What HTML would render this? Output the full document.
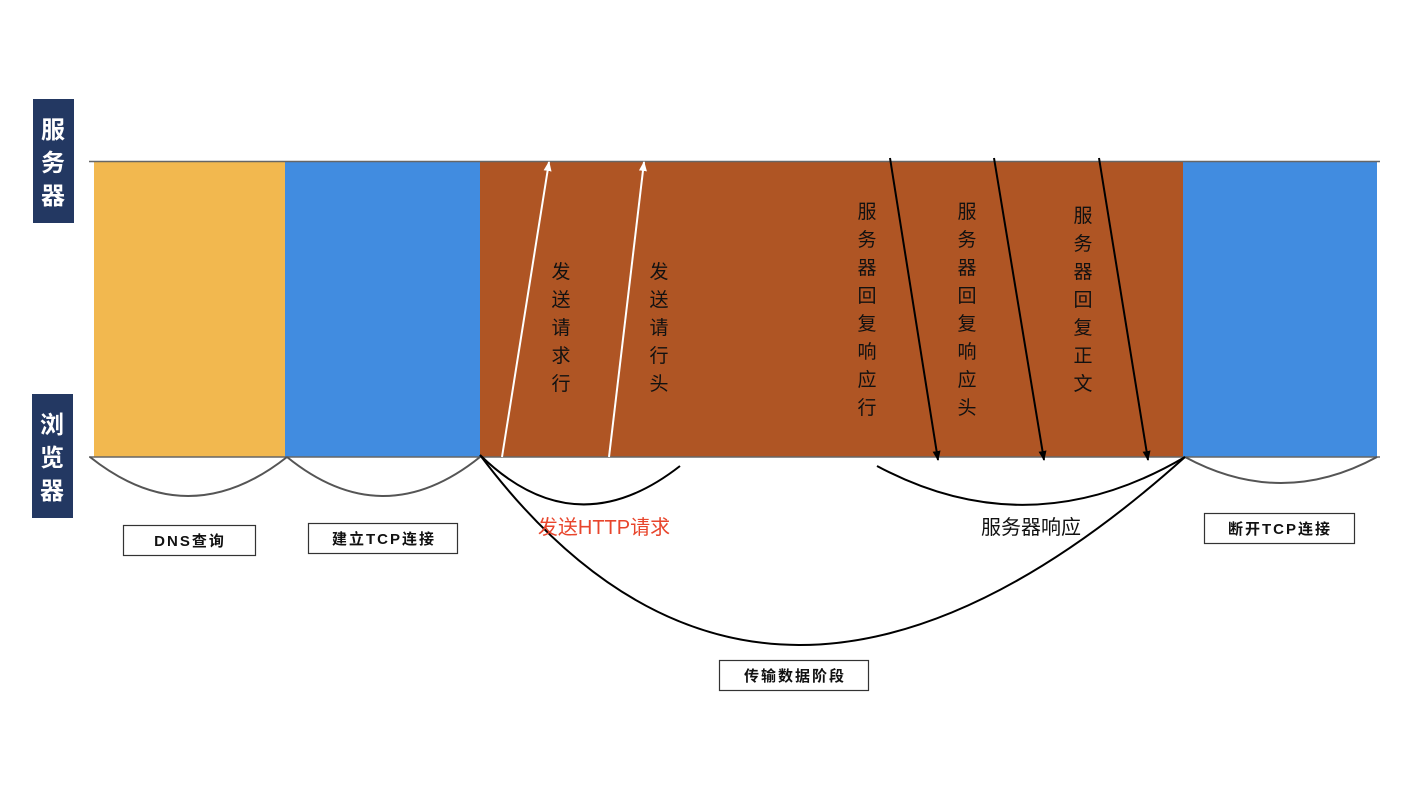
<!DOCTYPE html>
<html><head><meta charset="utf-8"><style>
html,body{margin:0;padding:0;background:#fff;width:1413px;height:795px;overflow:hidden}
svg{display:block}
text{font-family:"Liberation Sans","Noto Sans CJK SC",sans-serif}
</style></head><body>
<svg width="1413" height="795" viewBox="0 0 1413 795" xmlns="http://www.w3.org/2000/svg">
<defs>
<marker id="aw" markerWidth="10" markerHeight="8" refX="9" refY="4" orient="auto" markerUnits="userSpaceOnUse" viewBox="0 0 10 8"><path d="M0,0 L10,4 L0,8 Z" fill="#fff"/></marker>
<marker id="ab" markerWidth="10" markerHeight="8" refX="9" refY="4" orient="auto" markerUnits="userSpaceOnUse" viewBox="0 0 10 8"><path d="M0,0 L10,4 L0,8 Z" fill="#000"/></marker>
</defs>
<rect x="33" y="99" width="41" height="124" fill="#233862"/>
<rect x="32" y="394" width="41" height="124" fill="#233862"/>
<g fill="#fff" font-size="24" font-weight="bold" text-anchor="middle">
<text x="53" y="138">服</text><text x="53" y="171">务</text><text x="53" y="204">器</text>
<text x="52" y="433">浏</text><text x="52" y="466">览</text><text x="52" y="499">器</text>
</g>
<rect x="94" y="162" width="192" height="295" fill="#F2B84F"/>
<rect x="285" y="162" width="196" height="295" fill="#418CE0"/>
<rect x="480" y="162" width="704" height="295" fill="#AF5524"/>
<rect x="1183" y="162" width="194" height="295" fill="#418CE0"/>
<line x1="89" y1="161.5" x2="1380" y2="161.5" stroke="#666" stroke-width="1.5"/>
<line x1="89" y1="457" x2="1380" y2="457" stroke="#666" stroke-width="1.5"/>
<g fill="none" stroke="#555" stroke-width="2">
<path d="M90,457 Q188,535 287,457"/>
<path d="M287,457 Q383,535 480,457"/>
<path d="M1185,457 Q1281,509 1377,457"/>
</g>
<g fill="none" stroke="#000" stroke-width="2">
<path d="M480,455 Q575,548 680,466"/>
<path d="M877,466 Q1030,548 1185,457"/>
<path d="M480,455 Q765,834 1185,457"/>
</g>
<line x1="502" y1="457" x2="549" y2="162" stroke="#fff" stroke-width="2" marker-end="url(#aw)"/>
<line x1="609" y1="457" x2="644" y2="162" stroke="#fff" stroke-width="2" marker-end="url(#aw)"/>
<line x1="890" y1="158" x2="938" y2="460" stroke="#000" stroke-width="2" marker-end="url(#ab)"/>
<line x1="994" y1="158" x2="1044" y2="460" stroke="#000" stroke-width="2" marker-end="url(#ab)"/>
<line x1="1099" y1="158" x2="1148" y2="460" stroke="#000" stroke-width="2" marker-end="url(#ab)"/>
<g fill="#111" font-size="19" text-anchor="middle">
<text x="561" y="278">发</text><text x="561" y="306">送</text><text x="561" y="334">请</text><text x="561" y="362">求</text><text x="561" y="390">行</text>
<text x="659" y="278">发</text><text x="659" y="306">送</text><text x="659" y="334">请</text><text x="659" y="362">行</text><text x="659" y="390">头</text>
<text x="867" y="218">服</text><text x="867" y="246">务</text><text x="867" y="274">器</text><text x="867" y="302">回</text><text x="867" y="330">复</text><text x="867" y="358">响</text><text x="867" y="386">应</text><text x="867" y="414">行</text>
<text x="967" y="218">服</text><text x="967" y="246">务</text><text x="967" y="274">器</text><text x="967" y="302">回</text><text x="967" y="330">复</text><text x="967" y="358">响</text><text x="967" y="386">应</text><text x="967" y="414">头</text>
<text x="1083" y="222">服</text><text x="1083" y="250">务</text><text x="1083" y="278">器</text><text x="1083" y="306">回</text><text x="1083" y="334">复</text><text x="1083" y="362">正</text><text x="1083" y="390">文</text>
</g>
<text x="604" y="534" fill="#E8452C" font-size="20" text-anchor="middle">发送HTTP请求</text>
<text x="1031" y="534" fill="#111" font-size="20" text-anchor="middle">服务器响应</text>
<g fill="#fff" stroke="#333" stroke-width="1.2">
<rect x="123.5" y="525.5" width="132" height="30"/>
<rect x="308.5" y="523.5" width="149" height="30"/>
<rect x="1204.5" y="513.5" width="150" height="30"/>
<rect x="719.5" y="660.5" width="149" height="30"/>
</g>
<g fill="#111" font-size="15" font-weight="bold" text-anchor="middle" letter-spacing="2">
<text x="190" y="546">DNS查询</text>
<text x="384" y="544">建立TCP连接</text>
<text x="1280" y="534">断开TCP连接</text>
<text x="795" y="681">传输数据阶段</text>
</g>
</svg>
</body></html>
